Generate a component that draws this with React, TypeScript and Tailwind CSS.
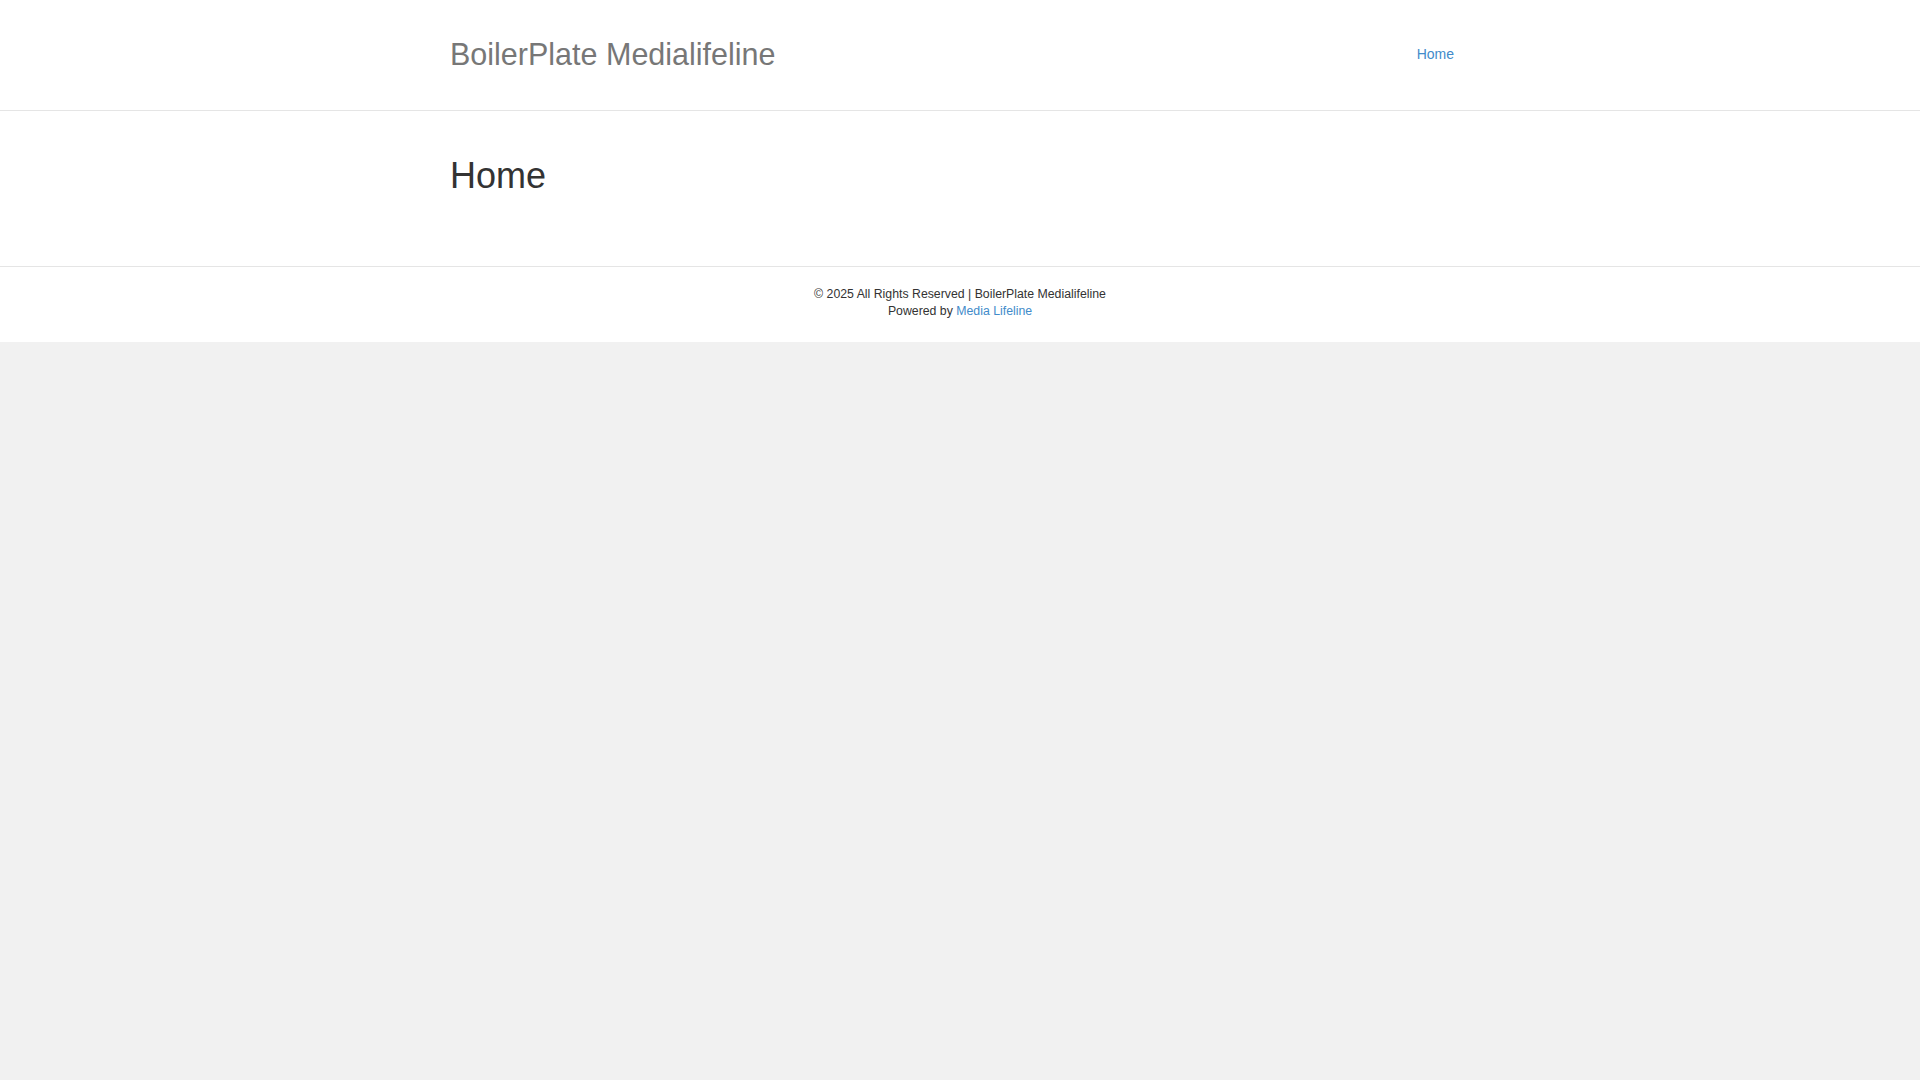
export default function App() {
  return (
    <div className="min-h-screen bg-[#f1f1f1]" style={{ fontFamily: '"Liberation Sans", Arial, sans-serif' }}>
      <header className="bg-white border-b border-[#e5e5e5] h-[111px]">
        <div className="mx-auto w-[1020px] h-full pb-[2px] flex items-center justify-between">
          <a className="text-[30.5px] leading-[34px] text-[#777777]">BoilerPlate Medialifeline</a>
          <nav>
            <a className="text-[14px] leading-[20px] text-[#428bca] pr-[16px]">Home</a>
          </nav>
        </div>
      </header>
      <main className="bg-white border-b border-[#e5e5e5]">
        <div className="mx-auto w-[1020px] pt-[45px] pb-[70px]">
          <h1 className="text-[36px] leading-[40px] text-[#333333]">Home</h1>
        </div>
      </main>
      <footer className="bg-white pt-[19px] pb-[22px] text-center text-[12.3px] leading-[17px] text-[#333333]">
        <p>© 2025 All Rights Reserved | BoilerPlate Medialifeline</p>
        <p>
          Powered by <a className="text-[#428bca]">Media Lifeline</a>
        </p>
      </footer>
    </div>
  );
}
